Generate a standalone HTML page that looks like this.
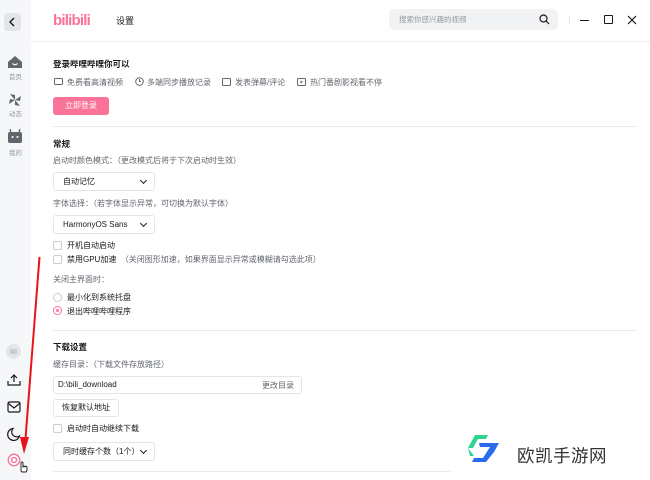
<!DOCTYPE html>
<html><head><meta charset="utf-8"><style>
*{margin:0;padding:0;box-sizing:border-box}
body{width:650px;height:480px;overflow:hidden;background:#fff;font-family:"Liberation Sans","Noto Sans CJK SC",sans-serif;color:#18191c;position:relative;font-size:8px}
.a{position:absolute;white-space:nowrap}
.side{position:absolute;left:0;top:0;width:31px;height:480px;background:#f6f7f8}
.hr{position:absolute;left:53px;width:584px;height:1px;background:#e8e9eb}
.t{font-size:8px;color:#61666d}
.b{font-size:8.5px;font-weight:bold;color:#18191c}
.sel{position:absolute;left:53px;width:102px;height:19px;border:1px solid #e3e5e7;border-radius:3px;font-size:8px;color:#18191c;padding-left:9px;line-height:17px}
.sel:after{content:"";position:absolute;right:8px;top:5px;width:4px;height:4px;border-right:1.3px solid #18191c;border-bottom:1.3px solid #18191c;transform:rotate(45deg)}
.cb{position:absolute;left:53px;width:9px;height:9px;border:1px solid #c9ccd0;border-radius:2px}
.lbl{font-size:8px;color:#18191c}
.ic{position:absolute;left:7px}
.st{position:absolute;width:31px;text-align:center;font-size:6.5px;color:#9499a0}
</style></head><body>
<div class="side"></div>
<div class="a" style="left:4px;top:13px;width:17px;height:18px;background:#e3e5e7;border-radius:3px"></div>
<svg class="a" style="left:8px;top:17px" width="9" height="10"><path d="M6 1L2 5L6 9" stroke="#18191c" stroke-width="1.4" fill="none"/></svg>
<svg class="ic" style="top:55px" width="16" height="14"><path d="M1 7L8 1L15 7V13H1Z" fill="#61666d"/><path d="M5.5 8.5Q8 11 10.5 8.5" stroke="#fff" stroke-width="1.2" fill="none"/></svg>
<div class="st" style="top:71px">首页</div>
<svg class="ic" style="top:93px" width="16" height="15"><g fill="#61666d"><path d="M8 7L3 1L8 2Z"/><path d="M8 7L14 3L13 8Z"/><path d="M8 7L13 13L8 12Z"/><path d="M8 7L2 11L3 6Z"/></g></svg>
<div class="st" style="top:108px">动态</div>
<svg class="ic" style="top:129px" width="16" height="15"><rect x="1" y="3" width="14" height="11" rx="2" fill="#61666d"/><path d="M4 3L3 0M12 3L13 0" stroke="#61666d" stroke-width="1.3"/><circle cx="5.5" cy="8" r="1" fill="#fff"/><circle cx="10.5" cy="8" r="1" fill="#fff"/></svg>
<div class="st" style="top:147px">我的</div>
<div class="a" style="left:6px;top:344px;width:15px;height:15px;border-radius:50%;background:#e3e5e7"></div>
<svg class="a" style="left:9px;top:347px" width="9" height="9"><rect x="1" y="2" width="7" height="5" rx="1" fill="#c9ccd0"/></svg>
<svg class="ic" style="top:373px" width="14" height="13"><path d="M7 9V2M4 5L7 2L10 5M1 8V12H13V8" stroke="#18191c" stroke-width="1.2" fill="none"/></svg>
<svg class="ic" style="top:401px" width="14" height="12"><rect x="1" y="1" width="12" height="10" rx="1.5" stroke="#18191c" stroke-width="1.2" fill="none"/><path d="M1.5 2.5L7 7L12.5 2.5" stroke="#18191c" stroke-width="1.2" fill="none"/></svg>
<svg class="ic" style="top:427px" width="14" height="14"><path d="M6 1.5A6 6 0 1 0 12.5 9A5 5 0 0 1 6 1.5Z" stroke="#18191c" stroke-width="1.2" fill="none"/></svg>
<svg class="ic" style="top:453px" width="14" height="14"><circle cx="7" cy="7" r="5.8" stroke="#fb7299" stroke-width="1.3" fill="none"/><circle cx="7" cy="7" r="2.5" stroke="#fb7299" stroke-width="1.3" fill="none"/></svg>
<svg class="a" style="left:17px;top:458px" width="12" height="15"><path d="M4 13V5a1 1 0 0 1 2 0v4l1-1 1 1 1-1 1 1v3l-1 2H5Z" stroke="#18191c" stroke-width="0.9" fill="#fff"/></svg>

<svg class="a" style="left:53px;top:11px" width="42" height="18"><text x="0" y="14" font-family="Liberation Sans" font-weight="bold" font-size="15" fill="#fb7299" letter-spacing="-0.8">bilibili</text></svg>
<div class="a" style="left:116px;top:14px;font-size:9px">设置</div>
<div class="a" style="left:389px;top:9px;width:169px;height:21px;background:#f1f2f3;border-radius:5px"></div>
<div class="a" style="left:399px;top:14px;font-size:7.5px;color:#9499a0">搜索你感兴趣的视频</div>
<svg class="a" style="left:539px;top:14px" width="11" height="11"><circle cx="4.5" cy="4.5" r="3.5" stroke="#18191c" stroke-width="1.2" fill="none"/><path d="M7 7L10 10" stroke="#18191c" stroke-width="1.2"/></svg>
<div class="a" style="left:569px;top:15px;width:1px;height:10px;background:#e3e5e7"></div>
<div class="a" style="left:580px;top:20px;width:9px;height:1.2px;background:#18191c"></div>
<div class="a" style="left:604px;top:15px;width:9px;height:9px;border:1.2px solid #18191c;border-radius:1px"></div>
<svg class="a" style="left:627px;top:15px" width="10" height="10"><path d="M1 1L9 9M9 1L1 9" stroke="#18191c" stroke-width="1.2"/></svg>
<div class="a" style="left:31px;top:41px;width:619px;height:1px;background:#eceef0"></div>

<div class="a b" style="left:53px;top:58px">登录哔哩哔哩你可以</div>
<svg class="a" style="left:54px;top:78px" width="9" height="8"><rect x="0.5" y="0.5" width="8" height="6" rx="1" stroke="#61666d" fill="none"/></svg>
<div class="a t" style="left:67px;top:77px">免费看高清视频</div>
<svg class="a" style="left:135px;top:77px" width="9" height="9"><circle cx="4.5" cy="4.5" r="3.8" stroke="#61666d" fill="none"/><path d="M4.5 2V4.5H6" stroke="#61666d" fill="none"/></svg>
<div class="a t" style="left:147px;top:77px">多端同步播放记录</div>
<svg class="a" style="left:222px;top:78px" width="9" height="8"><rect x="0.5" y="0.5" width="8" height="7" rx="1" stroke="#61666d" fill="none"/></svg>
<div class="a t" style="left:235px;top:77px">发表弹幕/评论</div>
<svg class="a" style="left:297px;top:78px" width="9" height="8"><rect x="0.5" y="0.5" width="8" height="7" rx="1" stroke="#61666d" fill="none"/><path d="M3.5 2.5L6 4L3.5 5.5Z" fill="#61666d"/></svg>
<div class="a t" style="left:310px;top:77px">热门番剧影视看不停</div>
<div class="a" style="left:53px;top:97px;width:56px;height:18px;background:#fb7299;border-radius:3px;color:#fff;font-size:8px;text-align:center;line-height:18px">立即登录</div>
<div class="hr" style="top:126px"></div>

<div class="a b" style="left:53px;top:138px">常规</div>
<div class="a t" style="left:53px;top:155px">启动时颜色模式：（更改模式后将于下次启动时生效）</div>
<div class="sel" style="top:172px">自动记忆</div>
<div class="a t" style="left:53px;top:198px">字体选择：（若字体显示异常，可切换为默认字体）</div>
<div class="sel" style="top:215px">HarmonyOS Sans</div>
<div class="cb" style="top:241px"></div><div class="a lbl" style="left:67px;top:240px">开机自动启动</div>
<div class="cb" style="top:255px"></div><div class="a lbl" style="left:67px;top:254px">禁用GPU加速 <span style="color:#61666d">&nbsp;（关闭图形加速，如果界面显示异常或模糊请勾选此项）</span></div>
<div class="a t" style="left:53px;top:274px">关闭主界面时：</div>
<div class="a" style="left:53px;top:293px;width:9px;height:9px;border:1px solid #c9ccd0;border-radius:50%"></div>
<div class="a lbl" style="left:67px;top:292px">最小化到系统托盘</div>
<div class="a" style="left:53px;top:306px;width:9px;height:9px;border:1px solid #fb7299;border-radius:50%"></div>
<div class="a" style="left:56px;top:309px;width:3px;height:3px;background:#fb7299;border-radius:50%"></div>
<div class="a lbl" style="left:67px;top:306px">退出哔哩哔哩程序</div>
<div class="hr" style="top:330px"></div>

<div class="a b" style="left:53px;top:341px">下载设置</div>
<div class="a t" style="left:53px;top:359px">缓存目录：（下载文件存放路径）</div>
<div class="a" style="left:53px;top:376px;width:249px;height:18px;border:1px solid #e3e5e7;border-radius:3px"></div>
<div class="a lbl" style="left:58px;top:380px">D:\bili_download</div>
<div class="a t" style="left:262px;top:380px">更改目录</div>
<div class="a" style="left:53px;top:399px;width:66px;height:18px;border:1px solid #e3e5e7;border-radius:3px;font-size:8px;text-align:center;line-height:16px">恢复默认地址</div>
<div class="cb" style="top:424px"></div><div class="a lbl" style="left:67px;top:423px">启动时自动继续下载</div>
<div class="sel" style="top:442px">同时缓存个数（1个）</div>
<div class="hr" style="top:471px"></div>

<svg class="a" style="left:0;top:0" width="650" height="480"><path d="M39.5 257L25 445" stroke="#e8141b" stroke-width="2"/><path d="M20 437L24 454L29 437Z" fill="#e8141b"/></svg>

<div class="a" style="left:450px;top:420px;width:200px;height:60px;background:rgba(255,255,255,0.9)"></div>
<svg class="a" style="left:466px;top:434px" width="40" height="32"><path d="M9 1H22L20 5H12L7 14H2Z" fill="#2ed38e"/><path d="M2 14L8 22H4Z" fill="#2ed38e"/><path d="M13 9H33L28 18L20 28H6L8 24H17L24 13H14Z" fill="#2a6cf0"/></svg>
<div class="a" style="left:517px;top:443px;font-size:17.5px;color:#333;letter-spacing:0.5px">欧凯手游网</div>
</body></html>
